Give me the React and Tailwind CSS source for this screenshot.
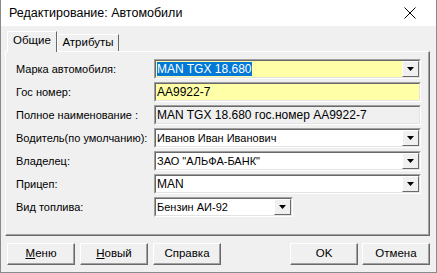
import React from 'react';

const sunkenOuter = 'border border-t-[#a0a0a0] border-l-[#a0a0a0] border-b-white border-r-white';
const sunkenInner = 'border border-t-[#696969] border-l-[#696969] border-b-[#e3e3e3] border-r-[#e3e3e3]';

function Arrow() {
    return (
        <div className="w-[17px] h-full shrink-0 bg-[#f0f0f0] border border-t-white border-l-white border-b-[#696969] border-r-[#696969] flex items-center justify-center">
            <svg width="7" height="4" viewBox="0 0 7 4"><path d="M0 0h7L3.5 4z" fill="#000" /></svg>
        </div>
    );
}

function Field({ width = 'w-[267px]', bg = 'bg-white', combo, selected, small, children }) {
    return (
        <div className={`${width} h-[20px] ${sunkenOuter}`}>
            <div className={`h-full ${sunkenInner} ${bg} flex items-center`}>
                <div className={`flex-1 pl-[1px] whitespace-nowrap overflow-hidden ${small ? 'text-[11px]' : ''}`}>
                    {selected ? <span className="bg-[#0078d7] text-white">{children}</span> : children}
                </div>
                {combo && <Arrow />}
            </div>
        </div>
    );
}

function Row({ label, children }) {
    return (
        <div className="flex items-center h-[20px]">
            <div className="w-[138px] shrink-0 whitespace-nowrap text-[11px]">{label}</div>
            {children}
        </div>
    );
}

function Btn({ children }) {
    return (
        <button className="w-[68px] h-[22px] bg-[#f0f0f0] border border-t-white border-l-white border-b-[#696969] border-r-[#696969] shadow-[inset_-1px_-1px_0_#a0a0a0] text-[11.5px] text-black">
            {children}
        </button>
    );
}

export default function App() {
    return (
        <div className="w-[437px] h-[273px] flex flex-col bg-[#f0f0f0] border-x border-b border-[#8a8a8a] text-[12px] text-black font-['Liberation_Sans',Arial,sans-serif] overflow-hidden">
            <div className="h-[26px] shrink-0 bg-white flex items-center justify-between pl-[8px] pr-[20px]">
                <span className="text-[12.5px]">Редактирование: Автомобили</span>
                <svg width="12" height="12" viewBox="0 0 12 12"><path d="M0.5 0.5L11.5 11.5M11.5 0.5L0.5 11.5" stroke="#000" strokeWidth="1" /></svg>
            </div>

            <div className="flex flex-col pl-[4px] pr-[6px]">
                <div className="h-[25px] flex items-end pl-[2px] relative z-10 text-[11.5px]">
                    <div className="w-[50px] h-[21px] bg-[#f0f0f0] border border-b-0 border-t-white border-l-white border-r-[#696969] flex items-center justify-center translate-y-[1px] pb-[2px]">Общие</div>
                    <div className="w-[62px] h-[17px] bg-[#f0f0f0] border border-b-0 border-t-white border-l-white border-r-[#696969] flex items-center justify-center">Атрибуты</div>
                </div>
                <div className="h-[185px] border border-t-white border-l-white border-b-[#696969] border-r-[#696969] shadow-[inset_-1px_-1px_0_#a0a0a0] pt-[7px] pl-[10px]">
                    <div className="flex flex-col gap-[3px]">
                        <Row label="Марка автомобиля:"><Field bg="bg-[#ffffa8]" combo selected>MAN TGX 18.680</Field></Row>
                        <Row label="Гос номер:"><Field bg="bg-[#ffffa8]">AA9922-7</Field></Row>
                        <Row label="Полное наименование :"><Field bg="bg-[#f0f0f0]">MAN TGX 18.680 гос.номер AA9922-7</Field></Row>
                        <Row label="Водитель(по умолчанию):"><Field combo small>Иванов Иван Иванович</Field></Row>
                        <Row label="Владелец:"><Field combo small>ЗАО "АЛЬФА-БАНК"</Field></Row>
                        <Row label="Прицеп:"><Field combo>MAN</Field></Row>
                        <Row label="Вид топлива:"><Field width="w-[139px]" combo small>Бензин АИ-92</Field></Row>
                    </div>
                </div>
                <div className="flex items-center mt-[7px] pl-[2px]">
                    <div className="flex gap-[5px]">
                        <Btn><span className="underline">М</span>еню</Btn>
                        <Btn><span className="underline">Н</span>овый</Btn>
                        <Btn>Справка</Btn>
                    </div>
                    <div className="flex gap-[4px] ml-auto">
                        <Btn>OK</Btn>
                        <Btn>Отмена</Btn>
                    </div>
                </div>
            </div>
        </div>
    );
}
